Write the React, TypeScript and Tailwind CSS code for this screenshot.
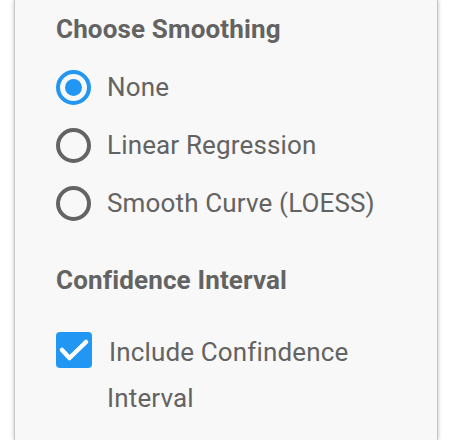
import React, { useState } from 'react';

const options = ['None', 'Linear Regression', 'Smooth Curve (LOESS)'];

const Radio: React.FC<{ checked: boolean }> = ({ checked }) => (
  <span
    className={`flex h-[35px] w-[35px] shrink-0 items-center justify-center rounded-full border-[4px] ${
      checked ? 'border-[#2196f3]' : 'border-[#646464]'
    }`}
  >
    {checked && <span className="h-[17px] w-[17px] rounded-full bg-[#2196f3]" />}
  </span>
);

const App: React.FC = () => {
  const [smoothing, setSmoothing] = useState(0);
  const [includeCi, setIncludeCi] = useState(true);

  return (
    <div className="h-[440px] overflow-hidden bg-white font-['Roboto',sans-serif] text-[26px] tracking-[0.15px] text-[#636363]">
      <div className="ml-[14px] h-[440px] w-[424px] border-x border-[#c6c6c6] bg-[#f8f8f8] pl-[41px] pr-[41px] shadow-[0_0_4px_rgba(0,0,0,0.25)]">
        <h2 className="pt-[14px] text-[26px] font-bold leading-[30px]">Choose Smoothing</h2>

        <div className="mt-[14px] flex flex-col">
          {options.map((label, i) => (
            <label
              key={label}
              onClick={() => setSmoothing(i)}
              className="flex h-[58px] cursor-pointer items-center gap-[16px]"
            >
              <Radio checked={smoothing === i} />
              <span className="leading-[30px]">{label}</span>
            </label>
          ))}
        </div>

        <h2 className="mt-[33px] text-[26px] font-bold leading-[30px]">Confidence Interval</h2>

        <label
          onClick={() => setIncludeCi(!includeCi)}
          className="mt-[34px] flex cursor-pointer items-start gap-[15px]"
        >
          <span
            className={`mt-[3px] flex h-[36px] w-[36px] shrink-0 items-center justify-center rounded-[4px] ${
              includeCi ? 'bg-[#2196f3]' : 'border-[4px] border-[#646464]'
            }`}
          >
            {includeCi && (
              <svg width="36" height="36" viewBox="0 0 36 36" fill="none">
                <polyline
                  points="6,18 13.5,26 30,10"
                  stroke="white"
                  strokeWidth="4.5"
                  strokeLinecap="round"
                  strokeLinejoin="round"
                />
              </svg>
            )}
          </span>
          <span className="indent-[2px] leading-[46px]">Include Confindence Interval</span>
        </label>
      </div>
    </div>
  );
};

export default App;
